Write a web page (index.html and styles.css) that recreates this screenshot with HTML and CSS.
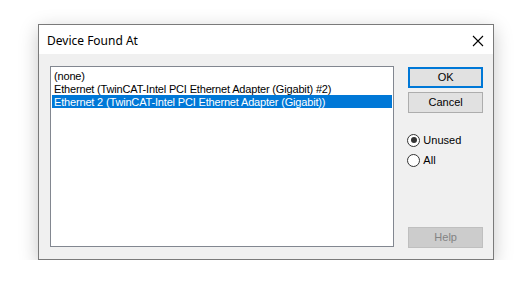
FILE: index.html
```html
<!DOCTYPE html>
<html>
<head>
  <title>Device Found At</title>
  <link rel="stylesheet" href="styles.css">
</head>
<body>
  <div class="dialog">
    <div class="title-bar">
      <span class="title">Device Found At</span>
      <svg class="close" width="12" height="12" viewBox="0 0 12 12">
        <path d="M1 1 L11 11 M11 1 L1 11" stroke="#000" stroke-width="1.1" fill="none"/>
      </svg>
    </div>

    <div class="dialog-body">
      <div class="listbox">
        <div class="item">(none)</div>
        <div class="item">Ethernet (TwinCAT-Intel PCI Ethernet Adapter (Gigabit) #2)</div>
        <div class="item selected">Ethernet 2 (TwinCAT-Intel PCI Ethernet Adapter (Gigabit))</div>
      </div>

      <div class="side">
        <div class="btn btn-default">OK</div>
        <div class="btn">Cancel</div>

        <div class="radios">
          <div class="radio-row">
            <span class="radio checked"></span>
            <span>Unused</span>
          </div>
          <div class="radio-row">
            <span class="radio"></span>
            <span>All</span>
          </div>
        </div>

        <div class="btn btn-disabled">Help</div>
      </div>
    </div>
  </div>
</body>
</html>
```

FILE: styles.css
```css
body {
  margin: 0;
  padding: 24px 0 0 38px;
  background-color: #fff;
  font-family: "Liberation Sans", Arial, sans-serif;
  font-size: 11px;
  color: #000;
}

.dialog {
  width: 454px;
  height: 234px;
  border: 1px solid #7a7a7a;
  background-color: #f0f0f0;
  box-shadow: 0 5px 18px rgba(0, 0, 0, 0.22);
  display: flex;
  flex-direction: column;
}

.title-bar {
  height: 30px;
  background-color: #fff;
  display: flex;
  align-items: center;
  justify-content: space-between;
  padding: 0 9px 0 8px;
}

.title {
  font-family: "Noto Sans", sans-serif;
  font-size: 12px;
  padding-top: 1px;
}

.close {
  margin-top: 2px;
}

.dialog-body {
  flex: 1;
  display: flex;
  padding: 12px 10px 12px 11px;
}

.listbox {
  width: 342px;
  height: 177px;
  border: 1px solid #828790;
  background-color: #fff;
  padding: 2px 1px 0 1px;
}

.item {
  height: 13px;
  line-height: 14px;
  padding-left: 2px;
  white-space: nowrap;
  letter-spacing: -0.17px;
}

.selected {
  background-color: #0078d7;
  color: #fff;
}

.side {
  margin-left: 14px;
  width: 75px;
  display: flex;
  flex-direction: column;
}

.btn {
  height: 19px;
  line-height: 19px;
  border: 1px solid #adadad;
  background-color: #e1e1e1;
  text-align: center;
  margin-bottom: 4px;
}

.btn-default {
  height: 17px;
  line-height: 17px;
  border: 2px solid #0078d7;
  margin-top: 1px;
}

.btn-disabled {
  margin-top: auto;
  margin-bottom: -1px;
  background-color: #cccccc;
  border-color: #bfbfbf;
  color: #838383;
}

.radios {
  margin-top: 13px;
}

.radio-row {
  display: flex;
  align-items: center;
  height: 20px;
  margin-left: -1px;
}

.radio {
  width: 11px;
  height: 11px;
  border: 1px solid #333;
  border-radius: 50%;
  background-color: #fff;
  margin-right: 3px;
  position: relative;
}

.radio.checked::after {
  content: "";
  position: absolute;
  left: 2.5px;
  top: 2.5px;
  width: 6px;
  height: 6px;
  border-radius: 50%;
  background-color: #333;
}
```
